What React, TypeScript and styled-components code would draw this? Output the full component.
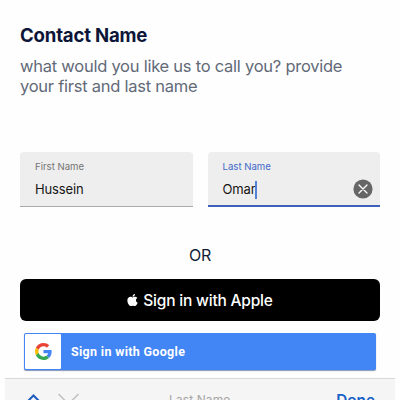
import React from "react";
import styled, { createGlobalStyle } from "styled-components";
import { FaApple } from "react-icons/fa";

const GlobalStyle = createGlobalStyle`
  *, *::before, *::after { box-sizing: border-box; }
  body { margin: 0; background: #fefefe; overflow: hidden; }
`;

const Screen = styled.main`
  display: flex;
  flex-direction: column;
  width: 400px;
  height: 400px;
  padding-top: 23px;
  overflow: hidden;
  font-family: Inter, "Liberation Sans", sans-serif;
`;

const Title = styled.h1`
  margin: 0 20px;
  font-size: 18.6px;
  line-height: 24px;
  font-weight: 700;
  letter-spacing: -0.2px;
  color: #0d1638;
`;

const Subtitle = styled.p`
  margin: 9px 20px 0;
  font-size: 16.5px;
  line-height: 20px;
  letter-spacing: -0.25px;
  color: #626a78;
  white-space: nowrap;
`;

const Fields = styled.div`
  display: grid;
  flex: none;
  grid-template-columns: 1fr 1fr;
  gap: 15px;
  height: 55px;
  margin: 56px 20px 0;
`;

const Field = styled.label<{ $active?: boolean }>`
  display: flex;
  align-items: center;
  justify-content: space-between;
  padding: 0 7px 0 15px;
  border-radius: 4px 4px 0 0;
  background: #eeeeee;
  box-shadow: inset 0 ${({ $active }) => ($active ? "-2px #3f60bb" : "-1px #aaaaaa")};
`;

const FieldText = styled.span`
  display: flex;
  flex-direction: column;
  height: 100%;
  padding-top: 8px;
`;

const FieldLabel = styled.span<{ $active?: boolean }>`
  font-size: 9.6px;
  line-height: 14px;
  color: ${({ $active }) => ($active ? "#4269ca" : "#747474")};
`;

const FieldValue = styled.span`
  display: flex;
  align-items: center;
  height: 18px;
  margin-top: 6px;
  font-size: 13px;
  letter-spacing: -0.15px;
  color: #161616;
`;

const Caret = styled.span`
  width: 2px;
  height: 18px;
  margin-top: 2px;
  background: #5580d8;
`;

const ClearIcon = styled.svg`
  width: 20px;
  height: 20px;
  margin-top: 19px;
`;

const Divider = styled.div`
  flex: none;
  margin-top: 36px;
  height: 24px;
  text-align: center;
  font-size: 16px;
  line-height: 24px;
  letter-spacing: -0.2px;
  color: #131c35;
`;

const AppleButton = styled.button`
  display: flex;
  align-items: center;
  justify-content: center;
  gap: 5px;
  flex: none;
  height: 42px;
  margin: 12px 20px 0;
  padding: 2px 0 0;
  border: 0;
  border-radius: 6px;
  background: #000;
  color: #fff;
  font: 500 15.5px/20px Inter, sans-serif;
  letter-spacing: -0.2px;
`;

const AppleLogo = styled(FaApple)`
  width: 11px;
  height: 14px;
  margin-bottom: 2px;
`;

const GoogleButton = styled.button`
  display: flex;
  align-items: center;
  flex: none;
  height: 37px;
  margin: 12px 24px 0;
  padding: 1px;
  border: 0;
  border-radius: 2px;
  background: #4285f4;
  color: #fff;
  box-shadow: 0 1px 1px #8295b8;
  font: 700 12.5px/18px Roboto, sans-serif;
  letter-spacing: 0.31px;
`;

const GoogleTile = styled.span`
  display: grid;
  place-items: center;
  width: 36px;
  height: 35px;
  margin-right: 10px;
  border-radius: 1px;
  background: #fff;
`;

const KeyboardBar = styled.footer`
  display: grid;
  grid-template-columns: 144px 1fr auto;
  flex: none;
  align-items: start;
  height: 44px;
  margin: 8px 5px 0;
  padding: 11px 20px 0 20px;
  border-top: 1px solid #d8d8d8;
  background: #f5f5f5;
`;

const Arrows = styled.svg`
  width: 56px;
  height: 14px;
  margin-top: 3px;
`;

const BarLabel = styled.span`
  padding-top: 1px;
  font-size: 12px;
  line-height: 18px;
  letter-spacing: 0.1px;
  color: #a6a6a6;
`;

const Done = styled.button`
  padding: 0;
  border: 0;
  background: none;
  color: #1a5fc6;
  font: 600 15.3px/22px Inter, sans-serif;
`;

function GoogleLogo() {
  return (
    <svg width="17" height="17" viewBox="0 0 48 48" aria-hidden="true">
      <path fill="#ea4335" d="M24 9.5c3.54 0 6.71 1.22 9.21 3.6l6.85-6.85C35.9 2.38 30.47 0 24 0 14.62 0 6.51 5.38 2.56 13.22l7.98 6.19C12.43 13.72 17.74 9.5 24 9.5z" />
      <path fill="#4285f4" d="M46.98 24.55c0-1.57-.15-3.09-.38-4.55H24v9.02h12.94c-.58 2.96-2.26 5.48-4.78 7.18l7.73 6c4.51-4.18 7.09-10.36 7.09-17.65z" />
      <path fill="#fbbc05" d="M10.53 28.59A14.5 14.5 0 0 1 9.77 24c0-1.6.27-3.14.76-4.59l-7.98-6.19A24 24 0 0 0 0 24c0 3.88.92 7.54 2.56 10.78l7.97-6.19z" />
      <path fill="#34a853" d="M24 48c6.48 0 11.93-2.13 15.89-5.81l-7.73-6c-2.15 1.45-4.92 2.3-8.16 2.3-6.26 0-11.57-4.22-13.47-9.91l-7.98 6.19C6.51 42.62 14.62 48 24 48z" />
    </svg>
  );
}

export default function App() {
  return (
    <>
      <GlobalStyle />
      <Screen>
        <Title>Contact Name</Title>
        <Subtitle>
          what would you like us to call you? provide
          <br />
          your first and last name
        </Subtitle>
        <Fields>
          <Field>
            <FieldText>
              <FieldLabel>First Name</FieldLabel>
              <FieldValue>Hussein</FieldValue>
            </FieldText>
          </Field>
          <Field $active>
            <FieldText>
              <FieldLabel $active>Last Name</FieldLabel>
              <FieldValue>
                Omar
                <Caret />
              </FieldValue>
            </FieldText>
            <ClearIcon viewBox="0 0 20 20">
              <circle cx="10" cy="10" r="9.6" fill="#666" />
              <path d="M6 6l8 8M14 6l-8 8" stroke="#fff" strokeWidth="1.3" strokeLinecap="round" />
            </ClearIcon>
          </Field>
        </Fields>
        <Divider>OR</Divider>
        <AppleButton>
          <AppleLogo />
          Sign in with Apple
        </AppleButton>
        <GoogleButton>
          <GoogleTile>
            <GoogleLogo />
          </GoogleTile>
          Sign in with Google
        </GoogleButton>
        <KeyboardBar>
          <Arrows viewBox="0 0 56 14" fill="none" strokeWidth="1.4">
            <path d="M1.5 9.5L8.5 2.5L15.5 9.5" stroke="#1d5dc0" strokeWidth="2" />
            <path d="M33.5 1L43.5 11L53.5 1" stroke="#bdbdbd" />
          </Arrows>
          <BarLabel>Last Name</BarLabel>
          <Done>Done</Done>
        </KeyboardBar>
      </Screen>
    </>
  );
}
